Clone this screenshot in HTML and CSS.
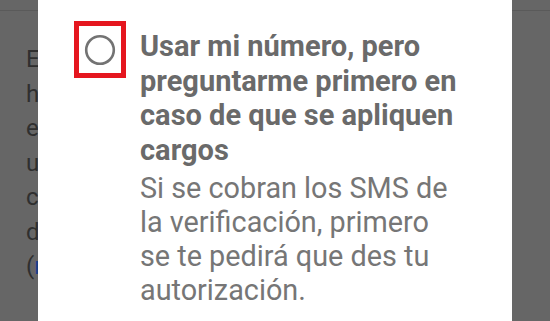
FILE: index.html
```html
<!DOCTYPE html>
<html lang="es">
<head>
<meta charset="utf-8">
<link rel="stylesheet" href="styles.css">
</head>
<body>
<div class="page">
  <div class="topbar"></div>
  <div class="para">
    <span class="line">El número de teléfono</span>
    <span class="line">ha cambiado y se usará</span>
    <span class="line">en tu cuenta para</span>
    <span class="line">usarlo como método</span>
    <span class="line">con el que verificar que</span>
    <span class="line">de verdad eres tú</span>
    <span class="line">(<a class="link" href="#">más información</a>)</span>
  </div>
</div>
<div class="dialog">
  <div class="option">
    <div class="radio-mark">
      <svg class="radio" width="32" height="32" viewBox="0 0 32 32"><circle cx="16" cy="16" r="13.8" fill="none" stroke="#737373" stroke-width="2.6"/></svg>
    </div>
    <div class="option-text">
      <div class="option-title">Usar mi número, pero preguntarme primero en caso de que se apliquen cargos</div>
      <div class="option-desc">Si se cobran los SMS de la verificación, primero se te pedirá que des tu autorización.</div>
    </div>
  </div>
</div>
</body>
</html>
```
FILE: styles.css
```css
html, body {
  margin: 0;
  padding: 0;
}
body {
  width: 550px;
  height: 321px;
  overflow: hidden;
  background: #666666;
  font-family: Roboto, "Noto Sans", sans-serif;
  position: relative;
}
.page {
  display: flex;
  flex-direction: column;
}
.topbar {
  height: 10px;
  border-bottom: 1px solid #5a5a5a;
}
.para {
  display: flex;
  flex-direction: column;
  padding: 31px 0 0 26px;
  font-size: 24px;
  line-height: 34.5px;
  color: #2f2f2f;
}
.line {
  white-space: nowrap;
}
.link {
  color: #1a3f8a;
  text-decoration: none;
}
.dialog {
  position: absolute;
  left: 38px;
  top: 0;
  width: 474px;
  height: 321px;
  background: #ffffff;
  box-sizing: border-box;
  padding: 21px 0 0 36px;
}
.option {
  display: flex;
  align-items: flex-start;
  gap: 14px;
}
.radio-mark {
  width: 52px;
  height: 57px;
  box-sizing: border-box;
  border: 5px solid #e5161f;
  display: flex;
  align-items: center;
  justify-content: center;
  flex: none;
}
.option-text {
  width: 330px;
  padding-top: 8px;
}
.option-title {
  font-weight: 700;
  font-size: 29px;
  line-height: 34.5px;
  color: #6a6a6a;
}
.option-desc {
  max-width: 312px;
  margin-top: 4px;
  font-size: 28.8px;
  line-height: 34px;
  color: #767676;
}
```
